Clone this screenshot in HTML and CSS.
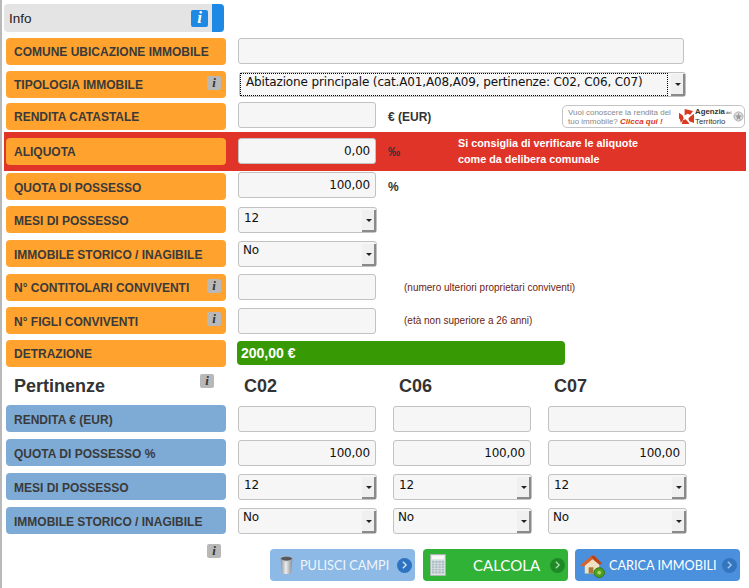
FILE: index.html
```html
<!DOCTYPE html>
<html lang="it">
<head>
<meta charset="utf-8">
<title>Calcolo IMU</title>
<link rel="stylesheet" href="styles.css">
</head>
<body>
<main class="page">
  <header class="info">
    <span class="info-title">Info</span>
    <span class="badge badge-blue">i</span>
    <span class="info-tab"></span>
  </header>

  <div class="row r-38">
    <div class="label orange text-high">COMUNE UBICAZIONE IMMOBILE</div>
    <input class="field field-wide" type="text">
  </div>

  <div class="row r-33">
    <div class="label orange text-high">TIPOLOGIA IMMOBILE<span class="badge badge-grey">i</span></div>
    <div class="select select-wide focused">
      <span class="select-text">Abitazione principale (cat.A01,A08,A09, pertinenze: C02, C06, C07)</span>
      <span class="arrow"></span>
    </div>
  </div>

  <div class="row r-32">
    <div class="label orange text-high">RENDITA CATASTALE</div>
    <input class="field up" type="text">
    <span class="unit">€ (EUR)</span>
    <a class="agenzia">
      <span class="agenzia-text">Vuoi conoscere la rendita del<br>tuo immobile? <em>Clicca qui !</em></span>
      <svg class="agenzia-logo" width="15" height="15" viewBox="0 0 16 16"><path d="M6 0l9 2-3 4-3-1-3 2zM0 4l4 3 1 3-3 5-1-4-1-1zM16 5l0 10-5-2-1-3 2-2zM4 12l3-1 3 3 1 2-8 0z" fill="#d9391f"/></svg>
      <span class="agenzia-name"><b>Agenzia</b><small> del</small><br>Territorio</span>
      <svg class="agenzia-seal" width="11" height="13" viewBox="0 0 12 14"><circle cx="6" cy="7" r="5" fill="#ddd" stroke="#aaa"/><path d="M6 3l1 3h3l-2.500 2 1 3L6 9.200 3.500 11l1-3L2 6h3z" fill="#999"/></svg>
    </a>
  </div>

  <div class="alert-band">
    <div class="label orange text-high">ALIQUOTA</div>
    <input class="field num up" type="text" value="0,00">
    <span class="unit unit-permille">‰</span>
    <p class="alert-text">Si consiglia di verificare le aliquote<br>come da delibera comunale</p>
  </div>

  <div class="row r-2">
    <div class="label orange">QUOTA DI POSSESSO</div>
    <input class="field num up" type="text" value="100,00">
    <span class="unit">%</span>
  </div>

  <div class="row r-33">
    <div class="label orange">MESI DI POSSESSO</div>
    <div class="select down"><span class="select-text">12</span><span class="arrow"></span></div>
  </div>

  <div class="row r-34">
    <div class="label orange">IMMOBILE STORICO / INAGIBILE</div>
    <div class="select down"><span class="select-text tight">No</span><span class="arrow"></span></div>
  </div>

  <div class="row r-34">
    <div class="label orange text-high">N° CONTITOLARI CONVIVENTI<span class="badge badge-grey">i</span></div>
    <input class="field" type="text">
    <span class="note">(numero ulteriori proprietari conviventi)</span>
  </div>

  <div class="row r-33">
    <div class="label orange">N° FIGLI CONVIVENTI<span class="badge badge-grey">i</span></div>
    <input class="field down" type="text">
    <span class="note">(età non superiore a 26 anni)</span>
  </div>

  <div class="row r-33">
    <div class="label orange text-high">DETRAZIONE</div>
    <div class="amount">200,00 €</div>
  </div>

  <div class="row heading-row">
    <div class="heading-main">Pertinenze<span class="badge badge-grey">i</span></div>
    <div class="cols">
      <div class="col-title">C02</div>
      <div class="col-title">C06</div>
      <div class="col-title">C07</div>
    </div>
  </div>

  <div class="row">
    <div class="label blue">RENDITA € (EUR)</div>
    <div class="cols down">
      <input class="field" type="text">
      <input class="field" type="text">
      <input class="field" type="text">
    </div>
  </div>

  <div class="row r-34">
    <div class="label blue">QUOTA DI POSSESSO %</div>
    <div class="cols down">
      <input class="field num" type="text" value="100,00">
      <input class="field num" type="text" value="100,00">
      <input class="field num" type="text" value="100,00">
    </div>
  </div>

  <div class="row r-34">
    <div class="label blue">MESI DI POSSESSO</div>
    <div class="cols down">
      <div class="select"><span class="select-text">12</span><span class="arrow"></span></div>
      <div class="select"><span class="select-text">12</span><span class="arrow"></span></div>
      <div class="select"><span class="select-text">12</span><span class="arrow"></span></div>
    </div>
  </div>

  <div class="row r-34">
    <div class="label blue">IMMOBILE STORICO / INAGIBILE</div>
    <div class="cols down">
      <div class="select"><span class="select-text tight">No</span><span class="arrow"></span></div>
      <div class="select"><span class="select-text tight">No</span><span class="arrow"></span></div>
      <div class="select"><span class="select-text tight">No</span><span class="arrow"></span></div>
    </div>
  </div>

  <div class="footer">
    <div class="footer-info"><span class="badge badge-grey">i</span></div>
    <div class="actions">
      <button class="btn btn-clear" type="button">
        <svg class="btn-icon" width="15" height="20" viewBox="0 0 20 25" preserveAspectRatio="none">
          <defs><linearGradient id="can" x1="0" x2="1" y1="0" y2="0"><stop offset="0" stop-color="#8b8f94"/><stop offset=".45" stop-color="#eceef0"/><stop offset="1" stop-color="#83888d"/></linearGradient></defs>
          <path d="M2 4l2 19c0 1 12 1 12 0l2-19z" fill="url(#can)"/>
          <ellipse cx="10" cy="4.500" rx="8" ry="3" fill="#55595d" stroke="#b9bdc1"/>
        </svg>
        <span class="btn-text">PULISCI CAMPI</span>
        <span class="chev chev-blue"><svg width="8" height="12" viewBox="0 0 8 12"><path d="M2 2l4 4-4 4" fill="none" stroke="#d5e4f5" stroke-width="1.600"/></svg></span>
      </button>
      <button class="btn btn-calc" type="button">
        <svg class="btn-icon" width="16" height="22" viewBox="0 0 17 26" preserveAspectRatio="none">
          <rect x=".5" y=".5" width="16" height="25" fill="#dfe5e3" stroke="#aab3ae"/>
          <rect x="2" y="2" width="13" height="4" fill="#f7f8f7"/>
          <path d="M2 8h13v15H2z" fill="#a9bcc4"/>
          <path d="M2 11h13M2 14h13M2 17h13M2 20h13M5 8v15M8.500 8v15M12 8v15" stroke="#e4e9e8" stroke-width=".8"/>
        </svg>
        <span class="btn-text btn-text-calc">CALCOLA</span>
        <span class="chev chev-green"><svg width="8" height="12" viewBox="0 0 8 12"><path d="M2 2l4 4-4 4" fill="none" stroke="#a9dba9" stroke-width="1.600"/></svg></span>
      </button>
      <button class="btn btn-load" type="button">
        <svg class="btn-icon" width="25" height="25" viewBox="0 0 26 28" preserveAspectRatio="none">
          <path d="M5 13v10h15V12l-6-6z" fill="#efe2c4"/>
          <path d="M0 14L12 3l3 0 8 9-3 1-7-6-9 8z" fill="#d9622b"/>
          <path d="M12 3l3 0 8 9-3 1-8-8z" fill="#b8461b"/>
          <rect x="9" y="16" width="5" height="7" fill="#a8793f"/>
          <circle cx="20" cy="22" r="5.500" fill="#4f9e22" stroke="#2f7a12"/>
          <circle cx="20" cy="22" r="2" fill="#a7d86b"/>
        </svg>
        <span class="btn-text">CARICA IMMOBILI</span>
        <span class="chev chev-navy"><svg width="8" height="12" viewBox="0 0 8 12"><path d="M2 2l4 4-4 4" fill="none" stroke="#a9c8ec" stroke-width="1.600"/></svg></span>
      </button>
    </div>
  </div>
</main>
</body>
</html>
```
FILE: styles.css
```css
* { box-sizing: border-box; }
html, body { margin: 0; padding: 0; background: #fff; }
body { height: 588px; overflow: hidden; font-family: "Liberation Sans", Arial, sans-serif; color: #333; }
.page { height: 588px; border-left: 2px solid #b9b9b9; padding: 4px 0 0 2px; }

.info { width: 220px; height: 28px; display: flex; align-items: center; background: #e4e4e4; border-radius: 4px; padding-left: 5px; overflow: hidden; }
.info-title { flex: 1; font-size: 13.500px; color: #222; }
.info-tab { width: 12px; height: 28px; background: #1e88e5; margin-left: 4px; }

.badge { display: inline-flex; width: 14px; height: 14px; align-items: center; justify-content: center; background: #b8b8b8; border-radius: 2px; font: italic bold 13px "Liberation Serif", serif; color: #333; }
.badge-blue { width: 17px; height: 17px; background: #1e88e5; color: #fff; font-size: 17px; }

.row { display: flex; align-items: flex-start; padding-left: 2px; height: 27px; }
.r-38 { margin-top: 6px; }
.r-33 { margin-top: 6px; }
.r-32 { margin-top: 5px; }
.r-34 { margin-top: 7px; }
.r-2 { margin-top: 2px; }
.up { margin-top: -1px; }
.down { margin-top: 1px; }

.label { position: relative; flex: none; width: 220px; height: 27px; border-radius: 4px; padding-left: 8px; font-size: 12px; font-weight: bold; line-height: 30px; color: #3a3a3a; white-space: nowrap; }
.label.text-high { line-height: 28px; }
.label .badge { position: absolute; right: 5px; top: 5px; }
.orange { background: #ffa22e; }
.blue { background: #7eaad6; }

.field { flex: none; width: 138px; height: 26px; margin-left: 12px; padding: 0 5px; background: #f6f6f6; border: 1px solid #c2c2c2; border-radius: 3px; font: 12px "DejaVu Sans", sans-serif; letter-spacing: -.2px; color: #111; outline: none; }
.field-wide { width: 446px; }
.num { text-align: right; }

.select { position: relative; flex: none; width: 139px; height: 26px; margin-left: 12px; background: #f6f6f6; border: 1px solid #c2c2c2; border-radius: 3px; font: 12px "DejaVu Sans", sans-serif; letter-spacing: -.14px; color: #111; }
.select-text { position: absolute; left: 5px; top: 2px; line-height: 16px; white-space: nowrap; }
.select-text.tight { left: 4px; top: 0; }
.arrow { position: absolute; right: 0; top: 2px; width: 14px; height: 22px; background: #f0f0f0; border-right: 2px solid #8a8a8a; border-bottom: 2px solid #8a8a8a; }
.arrow::after { content: ""; position: absolute; left: 4px; top: 9px; border: 3px solid transparent; border-top: 3px solid #222; border-bottom: 0; }

.select-wide { width: 447px; height: 25px; margin-left: 13px; margin-top: 1px; }
.focused .select-text { left: 0; top: 0; right: 17px; height: 23px; border: 1px dotted #000; padding-left: 5px; line-height: 17px; }
.focused .arrow { top: 1px; right: 0; }

.unit { font-size: 12px; font-weight: bold; margin-left: 12px; line-height: 28px; color: #333; }
.unit-permille { line-height: 26px; }

.agenzia { display: flex; align-items: center; width: 183px; height: 23px; margin: 2px 4px 0 auto; border: 1px solid #c4c4c4; border-radius: 5px; padding-left: 5px; font-size: 8px; color: #888; }
.agenzia-text { line-height: 9px; width: 111px; flex: none; }
.agenzia-text em { color: #d9391f; font-weight: bold; }
.agenzia-logo { flex: none; }
.agenzia-name { flex: none; margin-left: 1px; font-size: 7.800px; line-height: 9px; color: #333; }
.agenzia-name small { font-size: 4px; }
.agenzia-seal { flex: none; margin-left: 2px; }

.alert-band { display: flex; align-items: center; width: 742px; height: 39px; margin-top: 2px; background: #e03428; padding-left: 2px; }
.alert-text { margin: -2px 0 0 58px; font-size: 10.800px; font-weight: bold; line-height: 16px; color: #fff; }

.note { font-size: 10px; margin-left: 28px; line-height: 28px; color: #6a1d10; }

.amount { width: 328px; height: 24px; margin: 1px 0 0 11px; background: #379a04; border-radius: 4px; padding-left: 4px; font-size: 14px; font-weight: bold; line-height: 24px; color: #fff; }

.heading-row { margin-top: 10px; height: 28px; }
.heading-main { position: relative; flex: none; width: 220px; padding-left: 8px; font-size: 18px; font-weight: bold; line-height: 18px; color: #333; }
.heading-main .badge { position: absolute; right: 12px; top: -3px; }

.cols { display: flex; gap: 17px; margin-left: 12px; }
.cols .field, .cols .select { margin-left: 0; }
.cols .select { margin-right: -1px; }
.col-title { width: 138px; font-size: 18px; font-weight: bold; line-height: 18px; color: #333; padding-left: 6px; }

.footer { display: flex; height: 40px; margin-top: 7px; padding-left: 2px; }
.footer-info { flex: none; width: 220px; text-align: right; padding-right: 5px; }
.actions { flex: none; display: flex; margin: 8px 0 0 44px; height: 32px; }
.btn { display: flex; align-items: center; height: 32px; border: 0; border-radius: 4px; padding: 0 3px 0 8px; font: 12.700px Lato, sans-serif; color: #fff; white-space: nowrap; }
.btn-text { flex: 1; text-align: left; }
.btn-icon { flex: none; }
.btn-clear { width: 145px; background: #8cb9e6; padding-left: 9px; }
.btn-clear .btn-text { margin-left: 6px; color: #f0f6fc; }
.btn-calc { width: 145px; margin-left: 8px; background: #2fb236; padding-left: 7px; }
.btn-text-calc { margin-left: 27px; font-size: 15px; }
.btn-load { width: 165px; margin-left: 7px; background: #4a90dc; padding-left: 5px; }
.btn-load .btn-text { margin-left: 4px; }
.chev { flex: none; width: 15px; height: 15px; display: flex; align-items: center; justify-content: center; border-radius: 50%; }
.chev svg { width: 7px; height: 10px; }
.chev-blue { background: #2e73c2; }
.chev-green { background: #1e8a26; }
.chev-navy { background: #3475c0; }
```
